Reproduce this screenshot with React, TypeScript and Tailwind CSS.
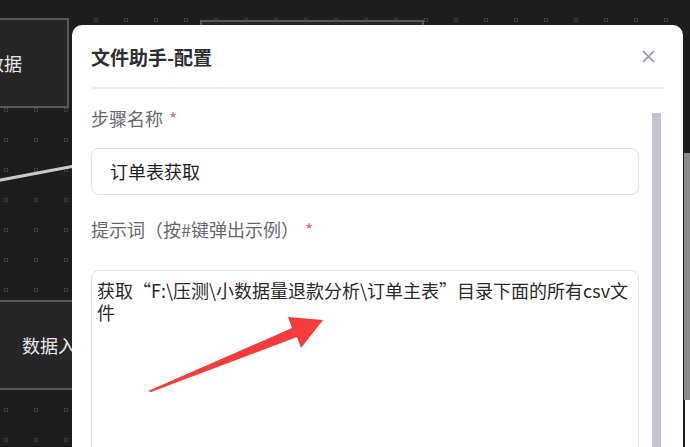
import type { ReactNode } from "react";

const font = { fontFamily: '"Noto Sans CJK SC", "Noto Sans", sans-serif' };

function Node({ className, children }: { className: string; children?: ReactNode }) {
  return (
    <div
      className={`absolute flex items-center border-2 border-[#575757] bg-[#262626] text-[18px] text-[#e6e6e6] ${className}`}
    >
      {children}
    </div>
  );
}

function Label({ text }: { text: string }) {
  return (
    <div className="flex h-[24px] items-center text-[18px] leading-[24px] text-[#66686c]">
      <span>{text}</span>
      <span className="ml-[6px] text-[#f56c6c]">*</span>
    </div>
  );
}

export default function App() {
  return (
    <div
      className="relative h-[447px] w-[690px] overflow-hidden bg-[#1d1d1d] bg-[radial-gradient(circle,transparent_1px,#3b3b3b_1.2px,#3b3b3b_2.2px,transparent_2.4px)] bg-[size:30px_30px] bg-[position:-9px_5px]"
      style={font}
    >
      {/* canvas */}
      <Node className="left-[-80px] top-[18px] h-[90px] w-[149px] justify-end pr-[45px]">数据</Node>
      <Node className="left-[200px] top-[20px] h-[90px] w-[224px]" />
      <Node className="left-[-10px] top-[300px] h-[90px] w-[160px] pl-[30px]">数据入口</Node>
      <svg className="absolute left-0 top-0" width="90" height="200">
        <line x1="-2" y1="180.5" x2="80" y2="165" stroke="#c9c9c9" strokeWidth="3" />
      </svg>

      {/* right strip behind */}
      <div className="absolute left-[684px] top-[153px] h-[247px] w-[6px] bg-[#8a8a8a]" />
      <div className="absolute left-[685px] top-[400px] h-[47px] w-[5px] bg-white" />

      {/* modal */}
      <div className="absolute left-[72px] top-[25px] flex h-[440px] w-[611px] flex-col rounded-t-[10px] bg-white px-[19px]">
        <div className="flex h-[62px] shrink-0 items-center justify-between">
          <h2 className="text-[19px] font-bold leading-none text-[#2b2d31]">文件助手-配置</h2>
          <svg width="13" height="13" viewBox="0 0 13 13" className="mr-[9px]">
            <path d="M1 1L12 12M12 1L1 12" stroke="#8d939c" strokeWidth="1.6" />
          </svg>
        </div>
        <div className="h-[2px] shrink-0 bg-[#e9edf2]" />
        <div className="flex min-h-0 flex-1">
          <div className="flex w-[548px] shrink-0 flex-col">
            <div className="mt-[17px]">
              <Label text="步骤名称" />
            </div>
            <div className="mt-[18px] flex h-[53px] items-center rounded-[8px] border border-[#dcdfe6] pl-[18px] text-[18px] text-[#1f1f1f]">
              订单表获取
            </div>
            <div className="mt-[22px]">
              <Label text="提示词（按#键弹出示例）" />
            </div>
            <div className="mt-[29px] h-[220px] rounded-[8px] border border-[#dcdfe6] px-[5px] pt-[8px] text-[18px] leading-[22px] text-[#2a2a2a]">
              获取“F:\压测\小数据量退款分析\订单主表”目录下面的所有csv文件
            </div>
          </div>
          <div className="ml-[13px] mt-[24px] w-[9px] bg-[#c1c4cc]" />
        </div>
      </div>

      {/* annotation arrow */}
      <svg className="pointer-events-none absolute left-0 top-0" width="690" height="447">
        <polygon
          points="148,391 292,328 288,317 323,320 301,348 297,337 151,392"
          fill="#f53c3c"
        />
      </svg>
    </div>
  );
}
